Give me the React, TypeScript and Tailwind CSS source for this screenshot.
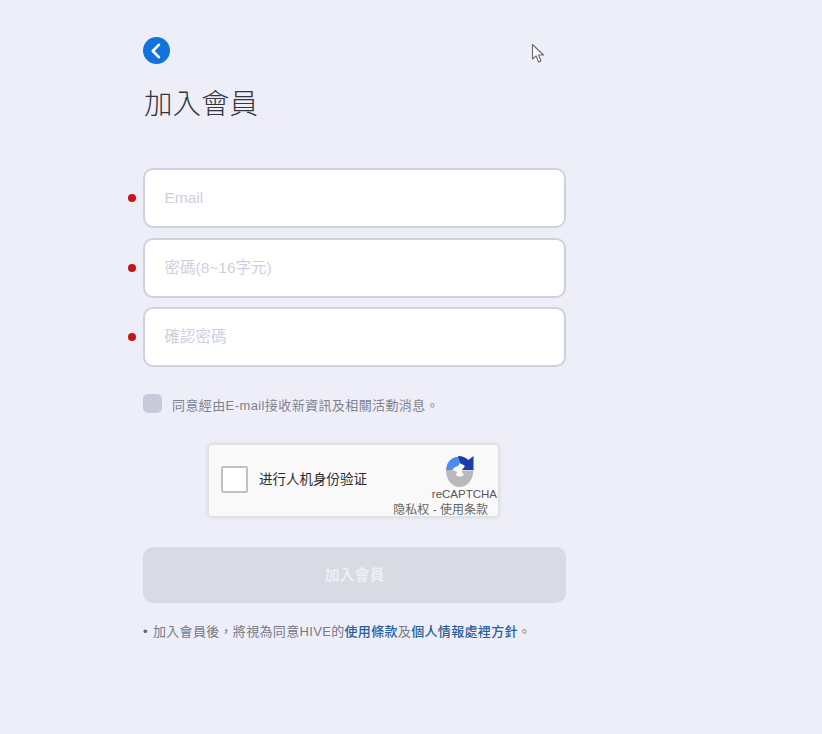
const font = { fontFamily: '"Liberation Sans", "Noto Sans CJK TC", sans-serif' };

function Field({ placeholder }: { placeholder: string }) {
  return (
    <div className="relative">
      <span className="absolute left-[-15px] top-[26px] h-[8px] w-[8px] rounded-full bg-[#c5141c]" />
      <div className="flex h-[60px] items-center rounded-[10px] border-2 border-[#cfd1e0] bg-white pl-[19.5px] text-[15.5px] text-[#cdd0dd]">
        {placeholder}
      </div>
    </div>
  );
}

export default function App() {
  return (
    <div lang="zh-TW" className="relative min-h-[734px] w-full overflow-hidden bg-[#eeeef8]" style={font}>
      <svg className="absolute left-[531px] top-[43px]" width="14" height="21" viewBox="0 0 14 21">
        <path d="M1.5 1.5 V16 L5 12.8 L7.6 19 L10 18 L7.6 12 L12.5 12 Z" fill="#fafafc" stroke="#6a6b72" strokeWidth="1.1" strokeLinejoin="round" />
      </svg>

      <div className="ml-[143px] flex w-[423px] flex-col pt-[37px]">
        <div className="flex h-[27px] w-[27px] items-center justify-center rounded-full bg-[#1274da]">
          <svg width="14" height="16" viewBox="0 0 14 16" fill="none">
            <path d="M8.8 1.8 L2.8 8 L8.8 14.2" stroke="white" strokeWidth="2.6" strokeLinecap="round" strokeLinejoin="round" />
          </svg>
        </div>

        <h1 className="mt-[21px] ml-[1px] text-[28.5px] leading-[38px] font-light text-[#35353d]">加入會員</h1>

        <div className="mt-[45px] flex flex-col gap-[9.5px]">
          <Field placeholder="Email" />
          <Field placeholder="密碼(8~16字元)" />
          <Field placeholder="確認密碼" />
        </div>

        <div className="mt-[27px] flex h-[19px] items-center">
          <span className="h-[19px] w-[19px] rounded-[5px] bg-[#c8cada]" />
          <span className="ml-[10px] pt-[3px] text-[13px] leading-[19px] tracking-[0.4px] text-[#80838f]">同意經由E-mail接收新資訊及相關活動消息。</span>
        </div>

        <div className="relative mt-[31px] ml-[65px] h-[73px] w-[291px] rounded-[3px] border border-[#e0e0e0] bg-[#f9f9f9] shadow-[0_0_4px_rgba(0,0,0,0.12)]">
          <div className="flex h-full items-start pt-[21px] pl-[12px]">
            <span className="h-[27px] w-[27px] rounded-[2px] border-2 border-[#c1c1c1] bg-white" />
            <span className="ml-[11px] text-[13.5px] leading-[27px] text-[#2b2b2b]">进行人机身份验证</span>
          </div>
          <svg className="absolute left-[236px] top-[10px]" width="30" height="33" viewBox="0 0 30 33">
            <path d="M1 15 C1.5 8 5 3.5 11 2 L14 2 L15 8 L13 11 L10 12 L7 15 Z" fill="#4a8df0" />
            <path d="M13 1 C18 1 21 3 23.5 5 L28.5 1 V15 H17 L20 11 C18 9.5 16 9 15 8 Z" fill="#1c3aa9" />
            <path d="M1 15 H8 L12 17 L11 20 C13 22 16 22 19 20 L17 17 V15.5 H28.5 C28 26 21.5 32 14.5 32 C7 32 1.2 25 1 15 Z" fill="#b9b9b9" />
          </svg>
          <span className="absolute right-[1px] top-[42px] text-[11.5px] leading-[14px] text-[#555]">reCAPTCHA</span>
          <span className="absolute right-[10px] top-[57.5px] text-[12px] leading-[14px] text-[#666] whitespace-nowrap">隐私权 - 使用条款</span>
        </div>

        <div className="mt-[30px] flex h-[56px] items-center justify-center rounded-[10px] bg-[#d8dae4] text-[15px] font-bold text-[#eeeef6]">
          加入會員
        </div>

        <p className="mt-[20px] text-[13px] leading-[18px] tracking-[0.33px] text-[#767986]">
          <span className="mr-[5px] text-[#5f6270]">•</span>加入會員後，將視為同意HIVE的
          <span className="font-medium text-[#2a5f9e]">使用條款</span>及<span className="font-medium text-[#2a5f9e]">個人情報處裡方針</span>。
        </p>
      </div>
    </div>
  );
}
